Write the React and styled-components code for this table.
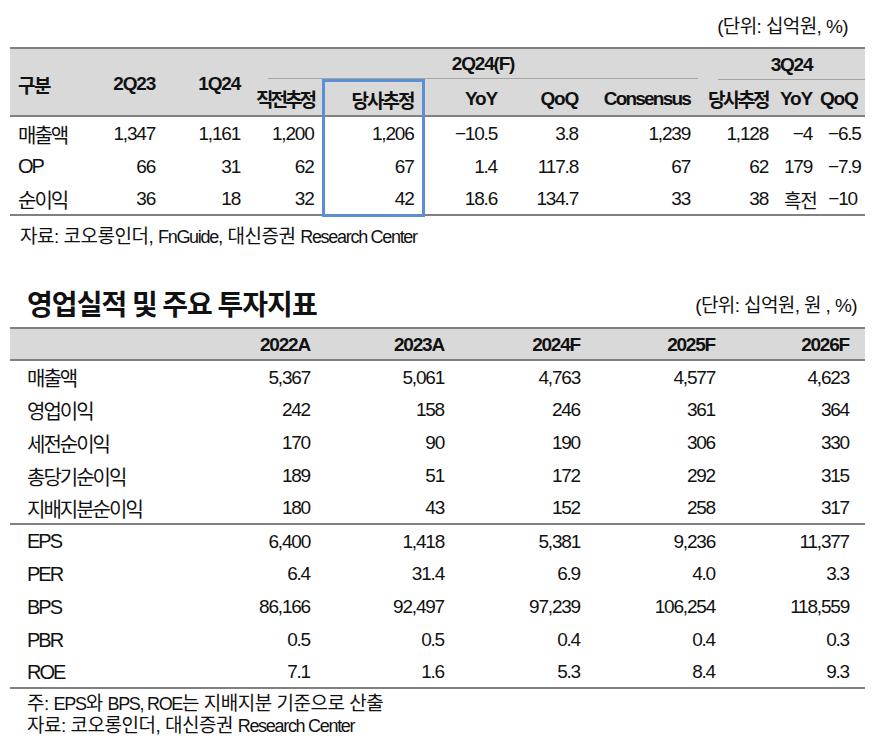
import React from "react";
import styled, { createGlobalStyle } from "styled-components";

const GlobalStyle = createGlobalStyle`
  body {
    margin: 0;
    background: #fff;
    color: #111;
    font-family: "Liberation Sans", "Noto Sans CJK KR", sans-serif;
  }
`;

const Page = styled.div`
  width: 877px;
  box-sizing: border-box;
  padding: 0 12px 0 10px;
`;

const Unit = styled.div`
  text-align: right;
  font-size: 19px;
  line-height: 22px;
  letter-spacing: -0.6px;
  padding-right: ${({ $pr }) => $pr}px;
`;

const TopUnit = styled(Unit)`
  height: 47px;
  box-sizing: border-box;
  padding-top: 16px;
`;

const Table = styled.table`
  width: 100%;
  table-layout: fixed;
  border-collapse: collapse;
  border-top: 2px solid #808080;
  border-bottom: 2px solid #808080;
`;

const Col = styled.col`
  width: ${({ $w }) => $w}px;
`;

const Head = styled.thead`
  border-bottom: 2px solid #808080;
`;

const Body = styled.tbody`
  border-top: ${({ $sep }) => ($sep ? "2px solid #808080" : "none")};
`;

const Row = styled.tr`
  height: ${({ $h }) => $h || 33}px;
`;

const hl = ({ $hl, $hlTop, $hlBottom }) =>
  $hl
    ? `
    border-left: 3px solid #5b8fd5;
    border-right: 3px solid #5b8fd5;
    ${$hlTop ? "border-top: 3px solid #5b8fd5;" : ""}
    ${$hlBottom ? "border-bottom: 3px solid #5b8fd5;" : ""}
  `
    : "";

const Th = styled.th`
  background: #d9d9d9;
  font-weight: 700;
  font-size: 19px;
  white-space: nowrap;
  text-align: ${({ $left }) => ($left ? "left" : "right")};
  padding: ${({ $pt }) => $pt || 0}px ${({ $pr }) => $pr ?? 8}px 0
    ${({ $pl }) => $pl ?? 8}px;
  letter-spacing: ${({ $ls }) => $ls ?? -1.2}px;
  vertical-align: middle;
  ${hl}
`;

const GroupTh = styled.th`
  background: linear-gradient(#a6a6a6, #a6a6a6) no-repeat right bottom /
      calc(100% - 20px) 1px,
    #d9d9d9;
  font-weight: 700;
  font-size: 19px;
  letter-spacing: -1.2px;
  text-align: center;
  padding: 0 0 0 20px;
`;

const Td = styled.td`
  font-size: 19px;
  white-space: nowrap;
  text-align: right;
  padding: 2px ${({ $pr }) => $pr ?? 8}px 0 8px;
  letter-spacing: -1.2px;
  ${hl}
`;

const LabelTd = styled(Td)`
  text-align: left;
  font-size: 20px;
  padding-left: ${({ $pl }) => $pl}px;
  letter-spacing: -2px;
`;

const Note = styled.p`
  margin: 0;
  font-size: 19px;
  line-height: 22px;
  letter-spacing: -0.5px;
  padding-left: ${({ $pl }) => $pl}px;
`;

const En = styled.span`
  font-size: 18px;
  letter-spacing: -1.3px;
`;

const TopNote = styled(Note)`
  margin-top: 9px;
`;

const TitleRow = styled.div`
  display: flex;
  justify-content: space-between;
  align-items: center;
  margin: 38px 0 7px;
`;

const Title = styled.h2`
  margin: 0;
  padding-left: 17px;
  font-size: 28px;
  line-height: 34px;
  font-weight: 700;
  letter-spacing: -0.9px;
  font-family: "Noto Sans CJK KR", sans-serif;
`;

const TitleUnit = styled(Unit)`
  padding-top: 6px;
`;

const BottomNotes = styled.div`
  margin-top: 4px;
`;

const quarterRows = [
  ["매출액", "1,347", "1,161", "1,200", "1,206", "−10.5", "3.8", "1,239", "1,128", "−4", "−6.5"],
  ["OP", "66", "31", "62", "67", "1.4", "117.8", "67", "62", "179", "−7.9"],
  ["순이익", "36", "18", "32", "42", "18.6", "134.7", "33", "38", "흑전", "−10"],
];

const annualTop = [
  ["매출액", "5,367", "5,061", "4,763", "4,577", "4,623"],
  ["영업이익", "242", "158", "246", "361", "364"],
  ["세전순이익", "170", "90", "190", "306", "330"],
  ["총당기순이익", "189", "51", "172", "292", "315"],
  ["지배지분순이익", "180", "43", "152", "258", "317"],
];

const annualBottom = [
  ["EPS", "6,400", "1,418", "5,381", "9,236", "11,377"],
  ["PER", "6.4", "31.4", "6.9", "4.0", "3.3"],
  ["BPS", "86,166", "92,497", "97,239", "106,254", "118,559"],
  ["PBR", "0.5", "0.5", "0.4", "0.4", "0.3"],
  ["ROE", "7.1", "1.6", "5.3", "8.4", "9.3"],
];

const topCols = [90, 63, 85, 75, 100, 82, 81, 112, 78, 44, 45];
const bottomCols = [181, 135, 134, 136, 135, 134];

const QuarterTable = () => (
  <Table>
    <colgroup>
      {topCols.map((w, i) => (
        <Col key={i} $w={w} />
      ))}
    </colgroup>
    <Head>
      <Row $h={32}>
        <Th rowSpan={2} $left $pt={4} $ls={-1.5}>
          구분
        </Th>
        <Th rowSpan={2} $pt={4}>
          2Q23
        </Th>
        <Th rowSpan={2} $pt={4}>
          1Q24
        </Th>
        <GroupTh colSpan={5}>2Q24(F)</GroupTh>
        <GroupTh colSpan={3}>3Q24</GroupTh>
      </Row>
      <Row $h={36}>
        <Th $pt={2} $ls={-3}>
          직전추정
        </Th>
        <Th $pt={2} $ls={-2} $hl $hlTop>
          당사추정
        </Th>
        <Th $pt={2}>YoY</Th>
        <Th $pt={2}>QoQ</Th>
        <Th $pt={2} $ls={-1.8}>
          Consensus
        </Th>
        <Th $pt={2} $ls={-2.5} $pl={0}>
          당사추정
        </Th>
        <Th $pt={2} $pl={0}>
          YoY
        </Th>
        <Th $pt={2} $pl={0}>
          QoQ
        </Th>
      </Row>
    </Head>
    <Body>
      {quarterRows.map((r, ri) => (
        <Row key={r[0]}>
          <LabelTd $pl={8}>{r[0]}</LabelTd>
          {r.slice(1).map((v, i) => (
            <Td
              key={i}
              $hl={i === 3}
              $hlBottom={i === 3 && ri === quarterRows.length - 1}
            >
              {v}
            </Td>
          ))}
        </Row>
      ))}
    </Body>
  </Table>
);

const AnnualRows = ({ rows }) =>
  rows.map((r, ri) => (
    <Row key={r[0]} $h={ri === rows.length - 1 ? 32 : 33}>
      <LabelTd $pl={17}>{r[0]}</LabelTd>
      {r.slice(1).map((v, i) => (
        <Td key={i} $pr={16}>
          {v}
        </Td>
      ))}
    </Row>
  ));

const AnnualTable = () => (
  <Table>
    <colgroup>
      {bottomCols.map((w, i) => (
        <Col key={i} $w={w} />
      ))}
    </colgroup>
    <Head>
      <Row $h={32}>
        <Th $left />
        {["2022A", "2023A", "2024F", "2025F", "2026F"].map((y) => (
          <Th key={y} $pr={16} $pt={2}>
            {y}
          </Th>
        ))}
      </Row>
    </Head>
    <Body>
      <AnnualRows rows={annualTop} />
    </Body>
    <Body $sep>
      <AnnualRows rows={annualBottom} />
    </Body>
  </Table>
);

const App = () => (
  <>
    <GlobalStyle />
    <Page>
      <TopUnit $pr={17}>(단위: 십억원, %)</TopUnit>
      <QuarterTable />
      <TopNote $pl={10}>
        자료: 코오롱인더, <En>FnGuide</En>, 대신증권 <En>Research Center</En>
      </TopNote>

      <TitleRow>
        <Title>영업실적 및 주요 투자지표</Title>
        <TitleUnit $pr={8}>(단위: 십억원, 원 , %)</TitleUnit>
      </TitleRow>
      <AnnualTable />
      <BottomNotes>
        <Note $pl={17}>
          주: <En>EPS</En>와 <En>BPS, ROE</En>는 지배지분 기준으로 산출
        </Note>
        <Note $pl={17}>
          자료: 코오롱인더, 대신증권 <En>Research Center</En>
        </Note>
      </BottomNotes>
    </Page>
  </>
);

export default App;
